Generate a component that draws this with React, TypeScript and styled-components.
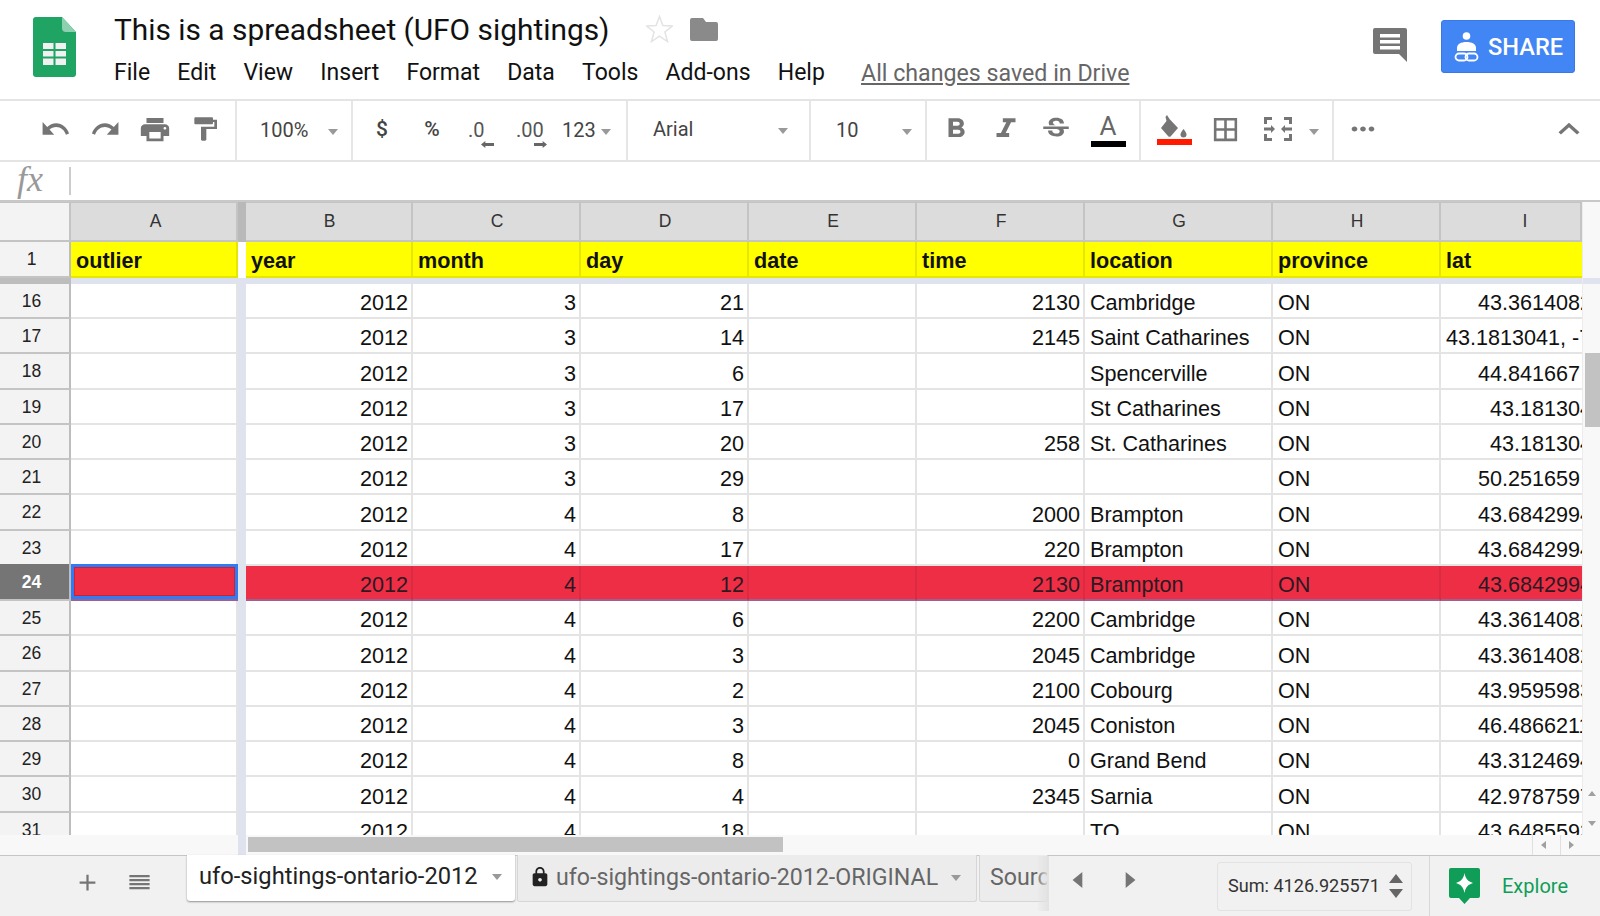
import styled, { createGlobalStyle } from 'styled-components';

const GlobalStyle = createGlobalStyle`
  html, body { margin: 0; padding: 0; background: #fff; }
  body { font-family: Roboto, "Liberation Sans", sans-serif; overflow: hidden; }
`;

const COLS = '71px 167px 8px 167px 168px 168px 168px 168px 188px 168px 141px';

const Page = styled.div`
  width: 1600px;
  height: 916px;
  overflow: hidden;
  display: flex;
  flex-direction: column;
`;

/* title bar */
const Header = styled.header`
  height: 99px;
  display: flex;
  border-bottom: 2px solid #e4e4e4;
`;
const LogoBox = styled.div`
  width: 114px;
  padding: 17px 0 0 33px;
  box-sizing: border-box;
`;
const TitleBlock = styled.div`
  flex: 1;
  padding-top: 9px;
`;
const TitleRow = styled.div`
  display: flex;
  align-items: center;
  height: 40px;
`;
const Title = styled.div`
  font-size: 29.85px;
  color: #111;
  margin-right: 37px;
`;
const Spacer = styled.span<{ $w: number }>`
  width: ${({ $w }) => $w}px;
  flex: none;
`;
const Menu = styled.nav`
  display: flex;
  gap: 27.2px;
  margin-top: 10px;
  font-size: 23px;
  line-height: 28px;
  color: #111;
`;
const Saved = styled.span`
  color: #666;
  font-size: 23.2px;
  text-decoration: underline;
  margin-left: 9px;
`;
const HeaderRight = styled.div`
  display: flex;
  align-items: flex-start;
  padding: 20px 25px 0 0;
  gap: 34px;
`;
const CommentBox = styled.div`
  padding-top: 8px;
`;
const ShareButton = styled.div`
  width: 134px;
  height: 53px;
  background: #4285f4;
  border: 1px solid #3b78e7;
  border-radius: 3px;
  box-sizing: border-box;
  color: #fff;
  display: flex;
  align-items: center;
  gap: 9px;
  padding-left: 12px;
  font-size: 23.6px;
  font-weight: 500;
`;

/* toolbar */
const Toolbar = styled.div`
  height: 59px;
  display: flex;
  border-bottom: 2px solid #e4e4e4;
`;
const ToolGroup = styled.div<{ $w: number; $pl?: number; $pb?: number; $last?: boolean }>`
  width: ${({ $w }) => $w}px;
  box-sizing: border-box;
  padding: 0 0 ${({ $pb = 0 }) => $pb}px ${({ $pl = 0 }) => $pl}px;
  display: flex;
  align-items: center;
  border-right: ${({ $last }) => ($last ? 'none' : '2px solid #e6e6e6')};
`;
const Slot = styled.span<{ $w?: number }>`
  width: ${({ $w = 50 }) => $w}px;
  flex: none;
  display: flex;
  align-items: center;
  justify-content: center;
  padding-bottom: 2px;
`;
const ToolText = styled.span<{ $bold?: boolean }>`
  font-size: ${({ $bold }) => ($bold ? 21 : 20)}px;
  font-weight: ${({ $bold }) => ($bold ? 500 : 400)};
  color: #444;
`;
const Caret = styled.span<{ $ml?: number }>`
  width: 0;
  height: 0;
  border-left: 5px solid transparent;
  border-right: 5px solid transparent;
  border-top: 6px solid #999;
  margin-left: ${({ $ml = 0 }) => $ml}px;
  margin-top: 3px;
  flex: none;
`;
const Decimal = styled.span<{ $w: number; $shift: number }>`
  width: ${({ $w }) => $w}px;
  flex: none;
  display: flex;
  flex-direction: column;
  align-items: flex-start;
  font-size: 20px;
  line-height: 20px;
  color: #555;
  margin-top: 8px;

  svg {
    margin: 1px 0 0 ${({ $shift }) => $shift}px;
  }
`;
const ColorTool = styled.span`
  display: flex;
  flex-direction: column;
  align-items: center;
  width: 35px;
  margin-top: 2px;
`;
const ColorBar = styled.span<{ $c: string }>`
  width: 35px;
  height: 6px;
  background: ${({ $c }) => $c};
`;
const LetterA = styled.span`
  font-size: 26px;
  line-height: 26px;
  color: #666;
  margin-bottom: 2px;
`;

/* formula bar */
const FormulaBar = styled.div`
  height: 38px;
  display: flex;
  align-items: center;
  border-bottom: 2px solid #c8c8c8;
`;
const Fx = styled.span`
  width: 69px;
  height: 38px;
  line-height: 34px;
  padding-left: 17px;
  box-sizing: border-box;
  font-family: "Liberation Serif", serif;
  font-style: italic;
  font-size: 36px;
  color: #999;
`;
const FormulaCaret = styled.span`
  width: 2px;
  height: 28px;
  background: #ccc;
`;

/* sheet */
const Sheet = styled.div`
  height: 634px;
  display: flex;
  overflow: hidden;
`;
const Grid = styled.div`
  width: 1582px;
  flex: none;
`;
const Row = styled.div<{ $h: number; $selected?: boolean }>`
  display: grid;
  grid-template-columns: ${COLS};
  height: ${({ $h }) => $h}px;
  box-sizing: border-box;
  ${({ $selected, $h }) =>
    $selected
      ? `background: #ee2e45;
         height: ${$h + 2}px;
         margin-top: -2px;
         box-shadow: inset 0 2px 0 #3579e8, inset 0 -2px 0 #a0608f;`
      : ''}
`;
const ColHead = styled.div<{ $pl?: number }>`
  background: #dcdcdc;
  border-right: 2px solid #c4c4c4;
  border-bottom: 2px solid #c4c4c4;
  border-top: 1px solid #c4c4c4;
  padding-left: ${({ $pl = 2 }) => $pl}px;
  display: flex;
  align-items: center;
  justify-content: center;
  font-family: "Liberation Sans", sans-serif;
  font-size: 17.5px;
  color: #333;
`;
const Corner = styled(ColHead)`
  background: #f3f3f3;
`;
const FreezeHead = styled.div`
  background: #b9b9b9;
`;
const RowNum = styled.div<{ $selected?: boolean }>`
  background: ${({ $selected }) => ($selected ? '#757575' : '#f3f3f3')};
  color: ${({ $selected }) => ($selected ? '#fff' : '#222')};
  font-weight: ${({ $selected }) => ($selected ? 700 : 400)};
  border-right: 2px solid #bdbdbd;
  border-bottom: 2px solid #c4c4c4;
  display: flex;
  align-items: center;
  justify-content: center;
  padding: 2px 6px 0 0;
  font-family: "Liberation Sans", sans-serif;
  font-size: 17.5px;
  overflow: hidden;
`;
const Cell = styled.div<{ $right?: boolean; $pl?: number; $clipped?: boolean }>`
  border-right: ${({ $clipped }) => ($clipped ? 'none' : '2px solid #e4e4e4')};
  border-bottom: 2px solid #e4e4e4;
  display: flex;
  align-items: flex-end;
  justify-content: ${({ $right }) => ($right ? 'flex-end' : 'flex-start')};
  padding: 0 ${({ $clipped }) => ($clipped ? 0 : 3)}px 0 ${({ $pl = 5 }) => $pl}px;
  font-family: "Liberation Sans", sans-serif;
  font-size: 21.6px;
  line-height: 28px;
  color: #111;
  white-space: nowrap;
  overflow: hidden;
`;
const RedCell = styled(Cell)`
  border-right-color: #d92b41;
  border-bottom-color: transparent;
  color: #2b1a22;
  margin-top: 2px;
`;
const ActiveCell = styled.div`
  background: #ee2e45;
  border: 3px solid #2f7df6;
  outline: 1px solid #d0202f;
  outline-offset: -4px;
  box-sizing: border-box;
  margin-bottom: 2px;
`;
const HeadCell = styled(Cell)`
  background: #ffff00;
  border-right-color: #e6e600;
  border-bottom-color: #e6e600;
  font-weight: 700;
  line-height: 30px;
`;
const FreezeGap = styled.div<{ $blank?: boolean }>`
  background: ${({ $blank }) => ($blank ? '#fff' : '#dfe3ee')};
`;
const FreezeBand = styled.div`
  height: 6px;
  display: flex;
  background: #dfe3ee;
`;
const FreezeBandHead = styled.div`
  width: 71px;
  background: #bdbdbd;
`;
const ScrollColumn = styled.div`
  flex: 1;
  background: #f8f8f8;
  display: flex;
  flex-direction: column;
  align-items: flex-end;
  border-left: 1px solid #ececec;
`;
const ScrollBand = styled.div`
  height: 6px;
  width: 100%;
  margin-top: 76px;
  background: #dfe3ee;
`;
const VThumb = styled.div`
  width: 15px;
  height: 74px;
  margin-top: 69px;
  background: #c2c2c2;
`;
const ScrollArrows = styled.div`
  margin-top: 364px;
  width: 100%;
  display: flex;
  flex-direction: column;
  align-items: center;
  gap: 25px;
`;
const TinyTri = styled.span<{ $dir: 'up' | 'down' | 'left' | 'right' }>`
  width: 0;
  height: 0;
  border: 4px solid transparent;
  ${({ $dir }) =>
    ({
      up: 'border-bottom: 5px solid #a0a0a0; border-top: 0;',
      down: 'border-top: 5px solid #a0a0a0; border-bottom: 0;',
      left: 'border-right: 5px solid #a0a0a0; border-left: 0;',
      right: 'border-left: 5px solid #a0a0a0; border-right: 0;',
    })[$dir]}
`;

/* horizontal scroll strip */
const HScroll = styled.div`
  height: 20px;
  background: #f8f8f8;
  display: flex;
`;
const HFreeze = styled.div`
  width: 8px;
  margin-left: 238px;
  background: #dfe3ee;
`;
const HThumb = styled.div`
  width: 535px;
  height: 15px;
  margin: 2px 0 0 2px;
  background: #c2c2c2;
`;
const HArrows = styled.div`
  margin-left: auto;
  width: 68px;
  padding-right: 12px;
  box-sizing: border-box;
  display: flex;
`;
const HArrow = styled.div`
  flex: 1;
  display: flex;
  align-items: center;
  justify-content: center;
  padding-right: 6px;
  border-left: 1px solid #e0e0e0;
`;

/* sheet tabs */
const TabBar = styled.div`
  height: 61px;
  box-sizing: border-box;
  background: #f1f1f1;
  border-top: 1px solid #c6c6c6;
  display: flex;
`;
const TabTools = styled.div`
  width: 187px;
  flex: none;
  display: flex;
  align-items: center;
  padding: 0 0 8px 74px;
  box-sizing: border-box;
  gap: 25px;
`;
const ActiveTab = styled.div`
  height: 46px;
  width: 328px;
  flex: none;
  box-sizing: border-box;
  background: #fff;
  border-radius: 0 0 3px 3px;
  box-shadow: 0 1px 2px rgba(0, 0, 0, 0.4);
  margin-top: -1px;
  display: flex;
  align-items: center;
  padding: 0 0 5px 12px;
  font-size: 23.7px;
  color: #222;
  gap: 14px;
`;
const Tab = styled.div<{ $w: number; $pl: number }>`
  height: 47px;
  width: ${({ $w }) => $w}px;
  flex: none;
  box-sizing: border-box;
  margin-left: 2px;
  margin-top: -1px;
  background: #ececec;
  border: 1px solid #d6d6d6;
  border-top: none;
  border-radius: 0 0 3px 3px;
  display: flex;
  align-items: center;
  padding: 0 0 3px ${({ $pl }) => $pl}px;
  font-size: 23.2px;
  color: #666;
  gap: 5px;
  white-space: nowrap;
  overflow: hidden;
`;
const TabFade = styled.div`
  width: 11px;
  height: 55px;
  flex: none;
  margin-left: -10px;
  background: linear-gradient(to right, rgba(225, 225, 225, 0.2), #e2e2e2);
`;
const TabNav = styled.div`
  width: 168px;
  flex: none;
  display: flex;
  padding: 0 0 12px 16px;
  box-sizing: border-box;
  align-items: center;
  gap: 26px;
`;
const SumBox = styled.div`
  width: 195px;
  height: 49px;
  flex: none;
  margin-top: 6px;
  box-sizing: border-box;
  border: 1px solid #e2e2e2;
  border-radius: 3px;
  display: flex;
  align-items: center;
  justify-content: space-between;
  padding: 0 8px 2px 10px;
  font-size: 18.1px;
  color: #333;
`;
const ExplorePanel = styled.div`
  margin-left: 17px;
  flex: 1;
  border-left: 1px solid #d8d8d8;
  display: flex;
  align-items: center;
  padding: 0 0 0 19px;
  gap: 22px;
  font-size: 20px;
  color: #0f9d58;
`;

const IconSvg = styled.svg`
  flex: none;
`;

const Ico = ({ d, w, h, vb = '0 0 24 24', c = '#757575' }: { d: string; w: number; h: number; vb?: string; c?: string }) => (
  <IconSvg width={w} height={h} viewBox={vb} preserveAspectRatio="none">
    <path d={d} fill={c} />
  </IconSvg>
);

const ICONS = {
  undo: 'M12.5 8c-2.65 0-5.05.99-6.9 2.6L2 7v9h9l-3.62-3.62c1.39-1.16 3.16-1.88 5.12-1.88 3.54 0 6.55 2.31 7.6 5.5l2.37-.78C21.08 11.03 17.15 8 12.5 8z',
  redo: 'M18.4 10.6C16.55 8.99 14.15 8 11.5 8c-4.65 0-8.58 3.03-9.96 7.22L3.9 16c1.05-3.19 4.05-5.5 7.6-5.5 1.95 0 3.73.72 5.12 1.88L13 16h9V7l-3.6 3.6z',
  print: 'M19 8H5c-1.66 0-3 1.34-3 3v6h4v4h12v-4h4v-6c0-1.66-1.34-3-3-3zm-3 11H8v-5h8v5zm3-7c-.55 0-1-.45-1-1s.45-1 1-1 1 .45 1 1-.45 1-1 1zm-1-9H6v4h12V3z',
  paint: 'M18 4V3c0-.55-.45-1-1-1H5c-.55 0-1 .45-1 1v4c0 .55.45 1 1 1h12c.55 0 1-.45 1-1V6h1v4H9v11c0 .55.45 1 1 1h2c.55 0 1-.45 1-1v-9h8V4h-3z',
  bold: 'M15.6 10.79c.97-.67 1.65-1.77 1.65-2.79 0-2.26-1.75-4-4-4H7v14h7.04c2.09 0 3.71-1.7 3.71-3.79 0-1.52-.86-2.82-2.15-3.42zM10 6.5h3c.83 0 1.5.67 1.5 1.5s-.67 1.5-1.5 1.5h-3v-3zm3.5 9H10v-3h3.5c.83 0 1.5.67 1.5 1.5s-.67 1.5-1.5 1.5z',
  italic: 'M10 4v3h2.21l-3.42 8H6v3h8v-3h-2.21l3.42-8H18V4z',
  strike: 'M7.24 8.75c-.26-.48-.39-1.03-.39-1.67 0-.61.13-1.16.4-1.67.26-.5.63-.93 1.11-1.29.48-.35 1.05-.63 1.7-.83.66-.19 1.39-.29 2.18-.29.81 0 1.54.11 2.21.34.66.22 1.23.54 1.69.94.47.4.83.88 1.08 1.43.25.55.38 1.15.38 1.81h-3.01c0-.31-.05-.59-.15-.85-.09-.27-.24-.49-.44-.68-.2-.19-.45-.33-.75-.44-.3-.1-.66-.16-1.06-.16-.39 0-.74.04-1.03.13-.29.09-.53.21-.72.36-.19.16-.34.34-.44.55-.1.21-.15.43-.15.66 0 .48.25.88.74 1.21.38.25.77.48 1.41.7H7.39c-.05-.08-.11-.17-.15-.25zM21 12v-2H3v2h9.62c.18.07.4.14.55.2.37.17.66.34.87.51.21.17.35.36.43.57.07.2.11.43.11.69 0 .23-.05.45-.14.66-.09.2-.23.38-.42.53-.19.15-.42.26-.71.35-.29.08-.63.13-1.01.13-.43 0-.83-.04-1.18-.13s-.66-.23-.91-.42c-.25-.19-.45-.44-.59-.75-.14-.31-.25-.76-.25-1.21H6.4c0 .55.08 1.13.24 1.58.16.45.37.85.65 1.21.28.35.6.66.98.92.37.26.78.48 1.22.65.44.17.9.3 1.38.39.48.08.96.13 1.44.13.8 0 1.53-.09 2.18-.28s1.21-.45 1.67-.79c.46-.34.82-.77 1.07-1.27s.38-1.07.38-1.71c0-.6-.1-1.14-.31-1.61-.05-.11-.11-.23-.17-.33H21z',
  borders: 'M3 3v18h18V3H3zm8 16H5v-6h6v6zm0-8H5V5h6v6zm8 8h-6v-6h6v6zm0-8h-6V5h6v6z',
  more: 'M6 10c-1.1 0-2 .9-2 2s.9 2 2 2 2-.9 2-2-.9-2-2-2zm12 0c-1.1 0-2 .9-2 2s.9 2 2 2 2-.9 2-2-.9-2-2-2zm-6 0c-1.1 0-2 .9-2 2s.9 2 2 2 2-.9 2-2-.9-2-2-2z',
  up: 'M12 8l-6 6 1.41 1.41L12 10.83l4.59 4.58L18 14z',
  lock: 'M18 8h-1V6c0-2.76-2.24-5-5-5S7 3.24 7 6v2H6c-1.1 0-2 .9-2 2v10c0 1.1.9 2 2 2h12c1.1 0 2-.9 2-2V10c0-1.1-.9-2-2-2zm-6 9c-1.1 0-2-.9-2-2s.9-2 2-2 2 .9 2 2-.9 2-2 2zm3.1-9H8.9V6c0-1.71 1.39-3.1 3.1-3.1 1.71 0 3.1 1.39 3.1 3.1v2z',
  plus: 'M19 13h-6v6h-2v-6H5v-2h6V5h2v6h6v2z',
  list: 'M3 5h18v2.2H3zM3 9h18v2.2H3zM3 13h18v2.2H3zM3 17h18v2.2H3z',
  left: 'M16 4v16L7 12z',
  right: 'M8 4v16l9-8z',
  arrowL: 'M0 5l6-5v3h12v4H6v3z',
  arrowR: 'M18 5l-6-5v3H0v4h12v3z',
  merge: 'M0 7V0h8v3H3v4zM20 0h8v7h-3V3h-5zM0 17h3v4h5v3H0zM25 17h3v7h-8v-3h5zM0 10.500h7V8l4 4-4 4v-2.500H0zM28 10.500h-7V8l-4 4 4 4v-2.500h7z',
};

const SheetsLogo = () => (
  <svg width="43" height="60" viewBox="0 0 43 60">
    <path d="M3 0h26l14 15v42a3 3 0 0 1-3 3H3a3 3 0 0 1-3-3V3a3 3 0 0 1 3-3z" fill="#1fa463" />
    <path d="M29 0l14 15H33a4 4 0 0 1-4-4z" fill="#8ed1b1" />
    <path d="M10 26h23v22H10z" fill="#f1f1f1" />
    <path d="M20.500 26h2v22h-2zM10 32h23v2H10zM10 39.500h23v2H10z" fill="#1fa463" />
  </svg>
);

const Star = () => (
  <svg width="27" height="28" viewBox="0 0 27 28">
    <path d="M13.500 1.500l3.400 9.100 9.400.4-7.400 6 2.600 9.500-8-5.400-8 5.400 2.600-9.500-7.400-6 9.400-.4z" fill="none" stroke="#e3e3e3" strokeWidth="1.500" />
  </svg>
);

const Folder = () => (
  <svg width="28" height="23" viewBox="0 0 28 23">
    <path d="M2 0h11l3 4h10a2 2 0 0 1 2 2v15a2 2 0 0 1-2 2H2a2 2 0 0 1-2-2V2a2 2 0 0 1 2-2z" fill="#8a8a8a" />
  </svg>
);

const CommentIcon = () => (
  <svg width="34" height="34" viewBox="0 0 34 34">
    <path d="M2 0h30a2 2 0 0 1 2 2v32l-8-8H2a2 2 0 0 1-2-2V2a2 2 0 0 1 2-2z" fill="#757575" />
    <path d="M7 6h20v3.500H7zM7 12h20v3.500H7zM7 18h20v3.500H7z" fill="#fff" />
  </svg>
);

const ShareIcon = () => (
  <svg width="25" height="30" viewBox="0 0 25 30">
    <circle cx="12.500" cy="4" r="3.800" fill="#fff" />
    <path d="M3 19v-3c0-4 4-6 9.500-6s9.500 2 9.500 6v3z" fill="#fff" />
    <rect x="1.500" y="21.500" width="12" height="7" rx="3.500" fill="none" stroke="#fff" strokeWidth="1.800" />
    <rect x="11.500" y="21.500" width="12" height="7" rx="3.500" fill="none" stroke="#fff" strokeWidth="1.800" />
  </svg>
);

const FillIcon = () => (
  <svg width="26" height="24" viewBox="0 0 26 24">
    <path d="M6 0l2.500 4 8.500 9-7 8a2 2 0 0 1-3 0L0 13l5.500-7-1-4z" fill="#757575" />
    <path d="M22.500 14s-3 3.500-3 5.500a3 3 0 0 0 6 0c0-2-3-5.500-3-5.500z" fill="#757575" />
  </svg>
);

const SumArrows = () => (
  <svg width="14" height="24" viewBox="0 0 14 24">
    <path d="M7 0l7 9H0zM0 15h14l-7 9z" fill="#666" />
  </svg>
);

const ExploreIcon = () => (
  <svg width="31" height="36" viewBox="0 0 31 36">
    <path d="M2 0h27a2 2 0 0 1 2 2v26a2 2 0 0 1-2 2h-8l-5.500 6L10 30H2a2 2 0 0 1-2-2V2a2 2 0 0 1 2-2z" fill="#0f9d58" />
    <path d="M15.500 5c1 5.500 3.500 8.500 8.500 10-5 1.500-7.500 4.500-8.500 10-1-5.500-3.500-8.500-8.500-10 5-1.500 7.500-4.500 8.500-10z" fill="#fff" />
  </svg>
);

const MENU = ['File', 'Edit', 'View', 'Insert', 'Format', 'Data', 'Tools', 'Add-ons', 'Help'];
const LETTERS = ['B', 'C', 'D', 'E', 'F', 'G', 'H'];
const HEADS = ['year', 'month', 'day', 'date', 'time', 'location', 'province'];

const ROWS: { n: number; m: number; d: number; t: string; loc: string; lat: string; pl: number }[] = [
  { n: 16, m: 3, d: 21, t: '2130', loc: 'Cambridge', lat: '43.3614082', pl: 37 },
  { n: 17, m: 3, d: 14, t: '2145', loc: 'Saint Catharines', lat: '43.1813041, -79', pl: 5 },
  { n: 18, m: 3, d: 6, t: '', loc: 'Spencerville', lat: '44.841667', pl: 37 },
  { n: 19, m: 3, d: 17, t: '', loc: 'St Catharines', lat: '43.181304', pl: 49 },
  { n: 20, m: 3, d: 20, t: '258', loc: 'St. Catharines', lat: '43.181304', pl: 49 },
  { n: 21, m: 3, d: 29, t: '', loc: '', lat: '50.251659', pl: 37 },
  { n: 22, m: 4, d: 8, t: '2000', loc: 'Brampton', lat: '43.6842994', pl: 37 },
  { n: 23, m: 4, d: 17, t: '220', loc: 'Brampton', lat: '43.6842994', pl: 37 },
  { n: 24, m: 4, d: 12, t: '2130', loc: 'Brampton', lat: '43.6842994', pl: 37 },
  { n: 25, m: 4, d: 6, t: '2200', loc: 'Cambridge', lat: '43.3614082', pl: 37 },
  { n: 26, m: 4, d: 3, t: '2045', loc: 'Cambridge', lat: '43.3614082', pl: 37 },
  { n: 27, m: 4, d: 2, t: '2100', loc: 'Cobourg', lat: '43.9595983', pl: 37 },
  { n: 28, m: 4, d: 3, t: '2045', loc: 'Coniston', lat: '46.4866211', pl: 37 },
  { n: 29, m: 4, d: 8, t: '0', loc: 'Grand Bend', lat: '43.3124694', pl: 37 },
  { n: 30, m: 4, d: 4, t: '2345', loc: 'Sarnia', lat: '42.9787597', pl: 37 },
  { n: 31, m: 4, d: 18, t: '', loc: 'TO', lat: '43.6485593', pl: 37 },
];

export default function App() {
  return (
    <Page>
      <GlobalStyle />
      <Header>
        <LogoBox>
          <SheetsLogo />
        </LogoBox>
        <TitleBlock>
          <TitleRow>
            <Title>This is a spreadsheet (UFO sightings)</Title>
            <Star />
            <Spacer $w={17} />
            <Folder />
          </TitleRow>
          <Menu>
            {MENU.map(m => (
              <span key={m}>{m}</span>
            ))}
            <Saved>All changes saved in Drive</Saved>
          </Menu>
        </TitleBlock>
        <HeaderRight>
          <CommentBox>
            <CommentIcon />
          </CommentBox>
          <ShareButton>
            <ShareIcon />
            SHARE
          </ShareButton>
        </HeaderRight>
      </Header>

      <Toolbar>
        <ToolGroup $w={237} $pl={30}>
          <Slot><Ico d={ICONS.undo} w={31} h={34} /></Slot>
          <Slot><Ico d={ICONS.redo} w={31} h={34} /></Slot>
          <Slot><Ico d={ICONS.print} w={34} h={31} /></Slot>
          <Slot><Ico d={ICONS.paint} w={32} h={28} /></Slot>
        </ToolGroup>
        <ToolGroup $w={116} $pl={23}>
          <ToolText>100%</ToolText>
          <Caret $ml={20} />
        </ToolGroup>
        <ToolGroup $w={275} $pl={4}>
          <Slot><ToolText $bold>$</ToolText></Slot>
          <Slot><ToolText $bold>%</ToolText></Slot>
          <Spacer $w={11} />
          <Decimal $w={48} $shift={13}>
            .0
            <Ico d={ICONS.arrowL} w={13} h={7} vb="0 0 18 10" c="#666" />
          </Decimal>
          <Decimal $w={46} $shift={18}>
            .00
            <Ico d={ICONS.arrowR} w={13} h={7} vb="0 0 18 10" c="#666" />
          </Decimal>
          <ToolText>123</ToolText>
          <Caret $ml={5} />
        </ToolGroup>
        <ToolGroup $w={183} $pl={25} $pb={2}>
          <ToolText>Arial</ToolText>
          <Caret $ml={85} />
        </ToolGroup>
        <ToolGroup $w={116} $pl={25}>
          <ToolText>10</ToolText>
          <Caret $ml={44} />
        </ToolGroup>
        <ToolGroup $w={214} $pl={4}>
          <Slot><Ico d={ICONS.bold} w={36} h={32} /></Slot>
          <Slot><Ico d={ICONS.italic} w={38} h={32} /></Slot>
          <Slot><Ico d={ICONS.strike} w={34} h={30} /></Slot>
          <Slot $w={54}>
            <ColorTool>
              <LetterA>A</LetterA>
              <ColorBar $c="#000" />
            </ColorTool>
          </Slot>
        </ToolGroup>
        <ToolGroup $w={193} $pl={7}>
          <Slot $w={52}>
            <ColorTool>
              <FillIcon />
              <ColorBar $c="#ff1a00" />
            </ColorTool>
          </Slot>
          <Slot><Ico d={ICONS.borders} w={31} h={31} /></Slot>
          <Slot $w={56}><Ico d={ICONS.merge} w={28} h={24} vb="0 0 28 24" /></Slot>
          <Caret $ml={3} />
        </ToolGroup>
        <ToolGroup $w={265} $pl={12} $last>
          <Slot $w={34}><Ico d={ICONS.more} w={34} h={30} /></Slot>
          <Spacer $w={168} />
          <Slot $w={42}><Ico d={ICONS.up} w={42} h={38} /></Slot>
        </ToolGroup>
      </Toolbar>

      <FormulaBar>
        <Fx>fx</Fx>
        <FormulaCaret />
      </FormulaBar>

      <Sheet>
        <Grid>
          <Row $h={40}>
            <Corner />
            <ColHead $pl={4}>A</ColHead>
            <FreezeHead />
            {LETTERS.map(l => (
              <ColHead key={l}>{l}</ColHead>
            ))}
            <ColHead $pl={29}>I</ColHead>
          </Row>
          <Row $h={36}>
            <RowNum>1</RowNum>
            <HeadCell>outlier</HeadCell>
            <FreezeGap $blank />
            {HEADS.map(h => (
              <HeadCell key={h}>{h}</HeadCell>
            ))}
            <HeadCell $clipped>lat</HeadCell>
          </Row>
          <FreezeBand>
            <FreezeBandHead />
          </FreezeBand>
          {ROWS.map(r => {
            const selected = r.n === 24;
            const C = selected ? RedCell : Cell;
            return (
              <Row key={r.n} $h={35.25} $selected={selected}>
                <RowNum $selected={selected}>{r.n}</RowNum>
                {selected ? <ActiveCell /> : <Cell />}
                <FreezeGap />
                <C $right>2012</C>
                <C $right>{r.m}</C>
                <C $right>{r.d}</C>
                <C />
                <C $right>{r.t}</C>
                <C>{r.loc}</C>
                <C>ON</C>
                <C $pl={r.pl} $clipped>{r.lat}</C>
              </Row>
            );
          })}
        </Grid>
        <ScrollColumn>
          <ScrollBand />
          <VThumb />
          <ScrollArrows>
            <TinyTri $dir="up" />
            <TinyTri $dir="down" />
          </ScrollArrows>
        </ScrollColumn>
      </Sheet>

      <HScroll>
        <HFreeze />
        <HThumb />
        <HArrows>
          <HArrow>
            <TinyTri $dir="left" />
          </HArrow>
          <HArrow>
            <TinyTri $dir="right" />
          </HArrow>
        </HArrows>
      </HScroll>

      <TabBar>
        <TabTools>
          <Ico d={ICONS.plus} w={27} h={27} />
          <Ico d={ICONS.list} w={27} h={24} />
        </TabTools>
        <ActiveTab>
          ufo-sightings-ontario-2012
          <Caret />
        </ActiveTab>
        <Tab $w={460} $pl={11}>
          <Ico d={ICONS.lock} w={22} h={22} c="#222" />
          ufo-sightings-ontario-2012-ORIGINAL
          <Caret $ml={8} />
        </Tab>
        <Tab $w={69} $pl={10}>Sources</Tab>
        <TabFade />
        <TabNav>
          <Ico d={ICONS.left} w={26} h={24} />
          <Ico d={ICONS.right} w={26} h={24} />
        </TabNav>
        <SumBox>
          Sum: 4126.925571
          <SumArrows />
        </SumBox>
        <ExplorePanel>
          <ExploreIcon />
          Explore
        </ExplorePanel>
      </TabBar>
    </Page>
  );
}
